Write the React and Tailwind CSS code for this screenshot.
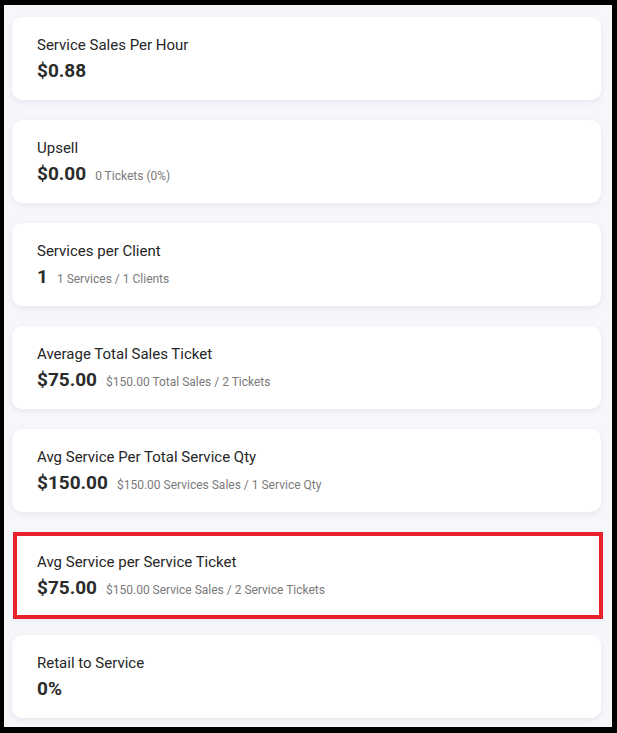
import React from "react";

const metrics = [
  { title: "Service Sales Per Hour", value: "$0.88" },
  { title: "Upsell", value: "$0.00", note: "0 Tickets (0%)" },
  { title: "Services per Client", value: "1", note: "1 Services / 1 Clients" },
  { title: "Average Total Sales Ticket", value: "$75.00", note: "$150.00 Total Sales / 2 Tickets" },
  { title: "Avg Service Per Total Service Qty", value: "$150.00", note: "$150.00 Services Sales / 1 Service Qty" },
  {
    title: "Avg Service per Service Ticket",
    value: "$75.00",
    note: "$150.00 Service Sales / 2 Service Tickets",
    highlight: true,
  },
  { title: "Retail to Service", value: "0%" },
];

function MetricCard({ title, value, note, highlight }) {
  return (
    <div
      className={
        highlight
          ? "h-[87px] -mb-[4px] ml-[1px] -mr-[2px] border-4 border-[#e8202a] bg-white pl-[20px] pt-[16px] shadow-[0_2px_6px_rgba(20,30,60,0.06)]"
          : "h-[83px] rounded-[10px] bg-white pl-[25px] pt-[18px] shadow-[0_2px_6px_rgba(20,30,60,0.07)]"
      }
    >
      <div className="text-[15px] leading-[20px] font-[450] text-[#262626]">{title}</div>
      <div className="mt-[3px] flex items-baseline gap-[9px]">
        <span className="text-[19px] leading-[26px] font-bold text-[#2b2b2b]">{value}</span>
        {note && <span className="text-[12px] text-[#7a7a7a]">{note}</span>}
      </div>
    </div>
  );
}

export default function App() {
  return (
    <div
      className="h-[733px] w-[617px] bg-black pt-[5px] pl-[4px] pr-[5px] pb-[6px]"
      style={{ fontFamily: "Roboto, 'Liberation Sans', sans-serif" }}
    >
      <div className="flex h-full flex-col gap-5 bg-[#f6f7fb] pt-[12px] pl-[8px] pr-[11px]">
        {metrics.map((m) => (
          <MetricCard key={m.title} {...m} />
        ))}
      </div>
    </div>
  );
}
